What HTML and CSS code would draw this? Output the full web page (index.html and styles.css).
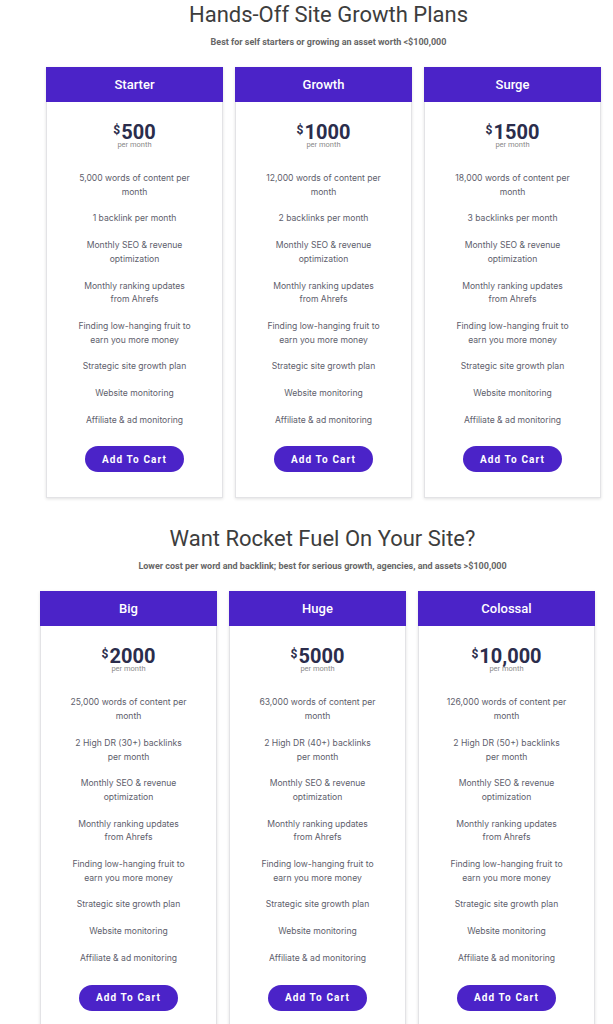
FILE: index.html
```html
<!DOCTYPE html>
<html lang="en">
<head>
  <meta charset="UTF-8" />
  <title>Site Growth Plans</title>
  <link rel="stylesheet" href="styles.css">
</head>
<body>

  <!-- Hands-off plans -->
  <section class="plans plans-first">
    <div class="plans-head">
      <h2 class="plans-title">Hands-Off Site Growth Plans</h2>
      <p class="plans-sub">Best for self starters or growing an asset worth &lt;$100,000</p>
    </div>

    <div class="cards">
      <div class="card">
        <div class="card-head">Starter</div>
        <div class="card-body">
          <div class="price"><span class="cur">$</span>500</div>
          <div class="period">per month</div>
          <ul class="features">
            <li>5,000 words of content per month</li>
            <li>1 backlink per month</li>
            <li>Monthly SEO &amp; revenue optimization</li>
            <li>Monthly ranking updates from Ahrefs</li>
            <li>Finding low-hanging fruit to earn you more money</li>
            <li>Strategic site growth plan</li>
            <li>Website monitoring</li>
            <li>Affiliate &amp; ad monitoring</li>
          </ul>
          <button class="cart-btn">Add To Cart</button>
        </div>
      </div>

      <div class="card">
        <div class="card-head">Growth</div>
        <div class="card-body">
          <div class="price"><span class="cur">$</span>1000</div>
          <div class="period">per month</div>
          <ul class="features">
            <li>12,000 words of content per month</li>
            <li>2 backlinks per month</li>
            <li>Monthly SEO &amp; revenue optimization</li>
            <li>Monthly ranking updates from Ahrefs</li>
            <li>Finding low-hanging fruit to earn you more money</li>
            <li>Strategic site growth plan</li>
            <li>Website monitoring</li>
            <li>Affiliate &amp; ad monitoring</li>
          </ul>
          <button class="cart-btn">Add To Cart</button>
        </div>
      </div>

      <div class="card">
        <div class="card-head">Surge</div>
        <div class="card-body">
          <div class="price"><span class="cur">$</span>1500</div>
          <div class="period">per month</div>
          <ul class="features">
            <li>18,000 words of content per month</li>
            <li>3 backlinks per month</li>
            <li>Monthly SEO &amp; revenue optimization</li>
            <li>Monthly ranking updates from Ahrefs</li>
            <li>Finding low-hanging fruit to earn you more money</li>
            <li>Strategic site growth plan</li>
            <li>Website monitoring</li>
            <li>Affiliate &amp; ad monitoring</li>
          </ul>
          <button class="cart-btn">Add To Cart</button>
        </div>
      </div>
    </div>
  </section>

  <!-- Bigger plans -->
  <section class="plans plans-second">
    <div class="plans-head">
      <h2 class="plans-title">Want Rocket Fuel On Your Site?</h2>
      <p class="plans-sub">Lower cost per word and backlink; best for serious growth, agencies, and assets &gt;$100,000</p>
    </div>

    <div class="cards">
      <div class="card">
        <div class="card-head">Big</div>
        <div class="card-body">
          <div class="price"><span class="cur">$</span>2000</div>
          <div class="period">per month</div>
          <ul class="features">
            <li>25,000 words of content per month</li>
            <li>2 High DR (30+) backlinks per month</li>
            <li>Monthly SEO &amp; revenue optimization</li>
            <li>Monthly ranking updates from Ahrefs</li>
            <li>Finding low-hanging fruit to earn you more money</li>
            <li>Strategic site growth plan</li>
            <li>Website monitoring</li>
            <li>Affiliate &amp; ad monitoring</li>
          </ul>
          <button class="cart-btn">Add To Cart</button>
        </div>
      </div>

      <div class="card">
        <div class="card-head">Huge</div>
        <div class="card-body">
          <div class="price"><span class="cur">$</span>5000</div>
          <div class="period">per month</div>
          <ul class="features">
            <li>63,000 words of content per month</li>
            <li>2 High DR (40+) backlinks per month</li>
            <li>Monthly SEO &amp; revenue optimization</li>
            <li>Monthly ranking updates from Ahrefs</li>
            <li>Finding low-hanging fruit to earn you more money</li>
            <li>Strategic site growth plan</li>
            <li>Website monitoring</li>
            <li>Affiliate &amp; ad monitoring</li>
          </ul>
          <button class="cart-btn">Add To Cart</button>
        </div>
      </div>

      <div class="card">
        <div class="card-head">Colossal</div>
        <div class="card-body">
          <div class="price"><span class="cur">$</span>10,000</div>
          <div class="period">per month</div>
          <ul class="features">
            <li>126,000 words of content per month</li>
            <li>2 High DR (50+) backlinks per month</li>
            <li>Monthly SEO &amp; revenue optimization</li>
            <li>Monthly ranking updates from Ahrefs</li>
            <li>Finding low-hanging fruit to earn you more money</li>
            <li>Strategic site growth plan</li>
            <li>Website monitoring</li>
            <li>Affiliate &amp; ad monitoring</li>
          </ul>
          <button class="cart-btn">Add To Cart</button>
        </div>
      </div>
    </div>
  </section>

</body>
</html>
```

FILE: styles.css
```css
body {
  margin: 0;
  font-family: Roboto, "Liberation Sans", sans-serif;
  background-color: #fff;
  color: #444;
}

.plans {
  width: 555px;
  text-align: center;
}

.plans-first {
  margin-left: 46px;
  padding-top: 2px;
}

.plans-second {
  margin-left: 40px;
  margin-top: 28px;
}

.plans-head {
  padding-left: 10px;
}

.plans-title {
  margin: 0;
  font-size: 22px;
  line-height: 26px;
  font-weight: 400;
  color: #3d3d3d;
}

.plans-sub {
  margin: 8px 0 0;
  font-size: 9px;
  line-height: 12px;
  font-weight: 700;
  color: #666;
}

.cards {
  display: grid;
  grid-template-columns: repeat(3, 177px);
  gap: 12px;
  margin-top: 19px;
}

.card {
  background-color: #fff;
  border: 1px solid #e3e3e6;
  box-shadow: 0 1px 3px rgba(0,0,0,0.12);
}

.card-head {
  height: 35px;
  line-height: 35px;
  margin: -1px -1px 0;
  background-color: #4b23c8;
  color: #fff;
  font-size: 13px;
  font-weight: 500;
}

.card-body {
  padding: 19px 0 25px;
}

.price {
  font-size: 20px;
  line-height: 18px;
  font-weight: 700;
  color: #2b2d4c;
}

.cur {
  font-size: 12px;
  vertical-align: 5px;
  margin-right: 1px;
}

.period {
  font-size: 7.5px;
  line-height: 8px;
  color: #8a8a8a;
}

.features {
  list-style: none;
  margin: 23px 0 0;
  padding: 0 27px;
  display: flex;
  flex-direction: column;
  gap: 13px;
  font-family: Inter, "Noto Sans", sans-serif;
  font-size: 8.6px;
  line-height: 13.7px;
  color: #5e606c;
}

.cart-btn {
  margin-top: 19px;
  width: 99px;
  height: 26px;
  border: none;
  border-radius: 13px;
  background-color: #4b23c8;
  color: #fff;
  font-family: Roboto, "Liberation Sans", sans-serif;
  font-size: 10px;
  font-weight: 700;
  letter-spacing: 1.1px;
  cursor: pointer;
}
```
